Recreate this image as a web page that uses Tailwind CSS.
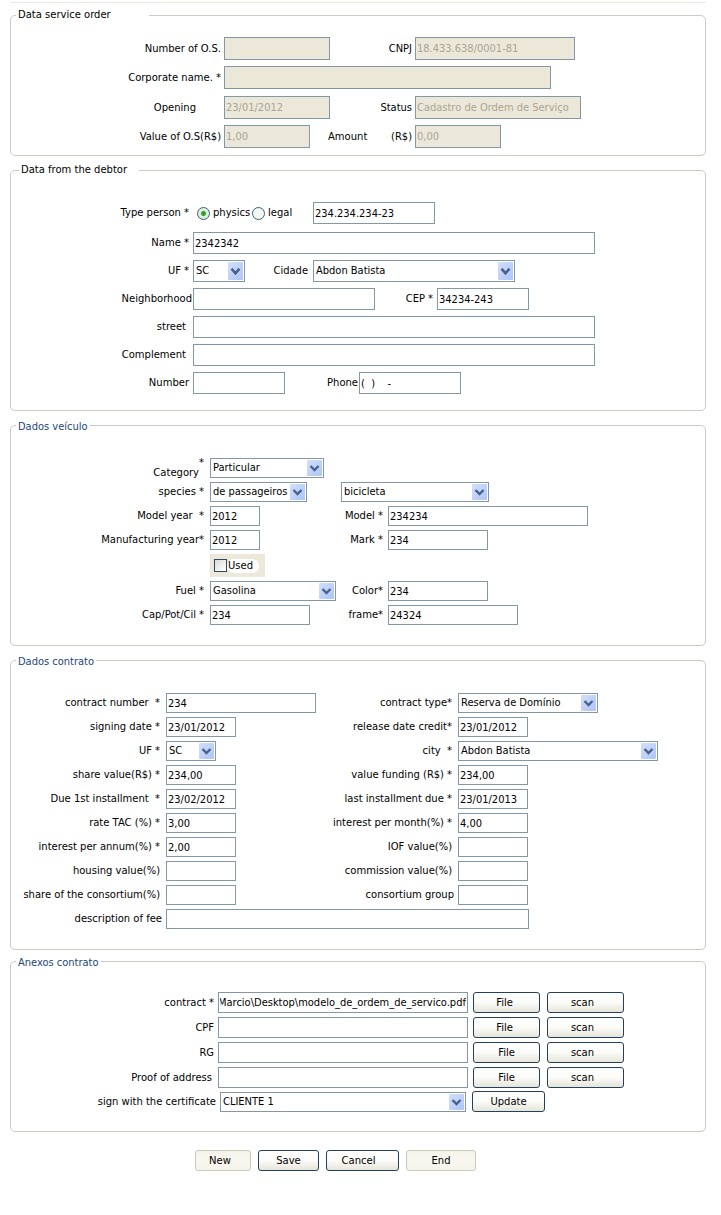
<!DOCTYPE html>
<html lang="en">
<head>
<meta charset="utf-8">
<meta name="viewport" content="width=device-width, initial-scale=1">
<title>Service order</title>
<script src="https://cdn.jsdelivr.net/npm/@tailwindcss/browser@4"></script>
</head>
<body class="bg-white text-black">
<svg class="absolute size-0" aria-hidden="true">
  <defs>
    <linearGradient id="g" x1="0" y1="0" x2="1" y2="1"><stop offset="0" stop-color="#d3e0fc"/><stop offset="1" stop-color="#adc4f5"/></linearGradient>
    <symbol id="arrow" viewBox="0 0 15 16" preserveAspectRatio="none"><rect width="15" height="16" rx="1" fill="url(#g)"/><path d="M3.5 6 7.5 10 11.5 6" fill="none" stroke="#46618f" stroke-width="2.4"/></symbol>
  </defs>
</svg>
<form class="pt-[2px] pl-[10px] pr-[15px] font-['DejaVu_Sans',sans-serif] text-[10px] leading-[14px]
  [&_fieldset]:rounded-[5px] [&_fieldset]:border [&_fieldset]:border-[#cbcbc2] [&_fieldset]:min-w-0
  [&_legend]:ml-[5px] [&_legend]:h-[14px] [&_legend]:pl-[2px]
  [&_label]:shrink-0 [&_label]:whitespace-pre
  [&_label_span]:font-['DejaVu_Sans_Condensed','DejaVu_Sans',sans-serif] [&_label_span]:text-[11px]
  [&_input[type=text]]:h-full [&_input[type=text]]:shrink-0 [&_input[type=text]]:border [&_input[type=text]]:border-[#8398a6] [&_input[type=text]]:px-px [&_input[type=text]]:font-['DejaVu_Sans_Condensed','DejaVu_Sans',sans-serif] [&_input[type=text]]:text-[11px] [&_input:disabled]:bg-[#ebe8d9] [&_input:disabled]:text-[#aaa594]
  [&_select]:h-full [&_select]:w-full [&_select]:appearance-none [&_select]:border [&_select]:border-[#8398a6] [&_select]:bg-white [&_select]:pl-[2px] [&_select]:font-['DejaVu_Sans_Condensed','DejaVu_Sans',sans-serif] [&_select]:text-[11px]
  [&_button]:h-[21px] [&_button]:shrink-0 [&_button]:rounded-[3px] [&_button]:border [&_button]:border-[#24405c] [&_button]:bg-linear-to-b [&_button]:from-white [&_button]:via-[#fbfbf8] [&_button]:to-[#e6e5da]
  [&_button:disabled]:border-[#cbc9ba] [&_button:disabled]:from-[#f5f4ea] [&_button:disabled]:via-[#f8f7f0] [&_button:disabled]:to-[#f5f4ea]">
  <hr class="mb-[5px] border-[#ebebe4]">

  <fieldset class="pt-[15px] pb-[7px]">
    <legend class="pr-[38px]">Data service order</legend>
    <div class="flex flex-col gap-[6px] [&>div]:flex [&>div]:h-[23px] [&>div]:items-center">
      <div><label for="os" class="w-[213px] pr-[3px] text-right">Number of O.S.</label><input id="os" type="text" disabled class="w-[106px]"><label for="cnpj" class="w-[85px] pr-[3px] text-right"><span>CNPJ</span></label><input id="cnpj" type="text" disabled value="18.433.638/0001-81" class="w-[160px]"></div>
      <div><label for="corp" class="w-[213px] pr-[3px] text-right">Corporate name. <span>*</span></label><input id="corp" type="text" disabled class="w-[327px]"></div>
      <div class="mt-[1px]"><label for="open" class="w-[213px] pr-[28px] text-right">Opening</label><input id="open" type="text" disabled value="23/01/2012" class="w-[106px]"><label for="status" class="w-[85px] pr-[3px] text-right"><span>Status</span></label><input id="status" type="text" disabled value="Cadastro de Ordem de Serviço" class="w-[166px]"></div>
      <div><label for="val" class="w-[213px] pr-[3px] text-right">Value of O.S<span>(R$)</span></label><input id="val" type="text" disabled value="1,00" class="w-[86px]"><label for="amt" class="flex w-[105px] items-center justify-between pr-[3px] pl-[18px]">Amount<span>(R$)</span></label><input id="amt" type="text" disabled value="0,00" class="w-[86px]"></div>
    </div>
  </fieldset>

  <fieldset class="mt-[7px] pt-[25px] pb-[16px]">
    <legend class="ml-[8px]! pr-[12px]">Data from the debtor</legend>
    <div class="flex flex-col gap-[6px] [&>div]:flex [&>div]:h-[22px] [&>div]:items-center">
      <div class="mb-[2px]"><label for="doc" class="w-[182px] pr-[4px] text-right">Type person <span>*</span></label>
        <div class="flex w-[120px] items-center pl-[4px]">
          <input id="phys" name="kind" type="radio" checked class="size-[13px] shrink-0 appearance-none rounded-full border border-[#3c5f7c] bg-[#f4f6f2] checked:bg-[radial-gradient(circle,#2fa32f_0_2px,#dff0df_3px)]"><label for="phys" class="w-[42px] pl-[3px]">physics</label>
          <input id="legal" name="kind" type="radio" class="size-[13px] shrink-0 appearance-none rounded-full border border-[#3c5f7c] bg-[#f4f6f2]"><label for="legal" class="pl-[3px]">legal</label>
        </div>
        <input id="doc" type="text" value="234.234.234-23" class="w-[122px]"></div>
      <div><label for="name" class="w-[182px] pr-[4px] text-right">Name <span>*</span></label><input id="name" type="text" value="2342342" class="w-[402px]"></div>
      <div><label for="uf1" class="w-[182px] pr-[4px] text-right"><span>UF *</span></label>
        <div class="relative h-full w-[52px]"><select id="uf1"><option>SC</option></select><svg class="pointer-events-none absolute top-[2px] right-[2px] h-[18px] w-[15px]"><use href="#arrow"/></svg></div>
        <label for="cid" class="w-[68px] pr-[5px] text-right"><span>Cidade</span></label>
        <div class="relative h-full w-[202px]"><select id="cid"><option>Abdon Batista</option></select><svg class="pointer-events-none absolute top-[2px] right-[2px] h-[18px] w-[15px]"><use href="#arrow"/></svg></div></div>
      <div><label for="nb" class="w-[182px] pr-[1px] text-right">Neighborhood</label><input id="nb" type="text" class="w-[182px]"><label for="cep" class="w-[62px] pr-[4px] text-right"><span>CEP *</span></label><input id="cep" type="text" value="34234-243" class="w-[92px]"></div>
      <div><label for="st" class="w-[182px] pr-[7px] text-right">street</label><input id="st" type="text" class="w-[402px]"></div>
      <div><label for="cmp" class="w-[182px] pr-[7px] text-right">Complement</label><input id="cmp" type="text" class="w-[402px]"></div>
      <div><label for="num" class="w-[182px] pr-[4px] text-right">Number</label><input id="num" type="text" class="w-[92px]"><label for="ph" class="w-[74px] pr-[1px] text-right">Phone</label><input id="ph" type="text" value="(  )    -" class="w-[102px]"></div>
    </div>
  </fieldset>

  <fieldset class="mt-[7px] pt-[26px] pb-[20px]">
    <legend class="pr-[2px] font-['DejaVu_Sans_Condensed','DejaVu_Sans',sans-serif] text-[11px] leading-[18px] text-[#1d4777]">Dados veículo</legend>
    <div class="flex flex-col gap-[4px] [&>div]:flex [&>div]:h-[20px] [&>div]:items-center">
      <div><label for="cat" class="flex w-[199px] items-start justify-end pr-[6px]"><span class="pt-[10px] font-['DejaVu_Sans',sans-serif]! text-[10px]!">Category</span><span>*</span></label>
        <div class="relative h-full w-[114px]"><select id="cat"><option>Particular</option></select><svg class="pointer-events-none absolute top-[2px] right-[2px] h-[16px] w-[15px]"><use href="#arrow"/></svg></div></div>
      <div><label for="sp" class="w-[199px] pr-[6px] text-right">species <span>*</span></label>
        <div class="relative h-full w-[97px]"><select id="sp"><option>de passageiros</option></select><svg class="pointer-events-none absolute top-[2px] right-[2px] h-[16px] w-[15px]"><use href="#arrow"/></svg></div>
        <div class="relative ml-[34px] h-full w-[148px]"><select id="sp2" aria-label="Vehicle kind"><option>bicicleta</option></select><svg class="pointer-events-none absolute top-[2px] right-[2px] h-[16px] w-[15px]"><use href="#arrow"/></svg></div></div>
      <div><label for="my" class="w-[199px] pr-[6px] text-right">Model year  <span>*</span></label><input id="my" type="text" value="2012" class="w-[50px]"><label for="md" class="w-[128px] pr-[5px] text-right">Model<span> *</span></label><input id="md" type="text" value="234234" class="w-[200px]"></div>
      <div><label for="fy" class="w-[199px] pr-[6px] text-right">Manufacturing year<span>*</span></label><input id="fy" type="text" value="2012" class="w-[50px]"><label for="mk" class="w-[128px] pr-[5px] text-right">Mark<span> *</span></label><input id="mk" type="text" value="234" class="w-[100px]"></div>
      <div class="h-[23px]!"><div class="ml-[199px] flex h-full w-[55px] items-center bg-[#ece9da] pl-[4px]"><input id="used" type="checkbox" class="size-[13px] shrink-0 appearance-none border border-[#2c4a66] bg-linear-to-br from-[#dcdcd5] to-white"><label for="used" class="rounded-[7px] bg-white pr-[6px] pl-px">Used</label></div></div>
      <div><label for="fu" class="w-[199px] pr-[6px] text-right">Fuel <span>*</span></label>
        <div class="relative h-full w-[126px]"><select id="fu"><option>Gasolina</option></select><svg class="pointer-events-none absolute top-[2px] right-[2px] h-[16px] w-[15px]"><use href="#arrow"/></svg></div>
        <label for="co" class="w-[52px] pr-[5px] text-right">Color<span>*</span></label><input id="co" type="text" value="234" class="w-[100px]"></div>
      <div><label for="cpc" class="w-[199px] pr-[6px] text-right"><span>Cap/Pot/Cil *</span></label><input id="cpc" type="text" value="234" class="w-[100px]"><label for="fr" class="w-[78px] pr-[5px] text-right">frame<span>*</span></label><input id="fr" type="text" value="24324" class="w-[130px]"></div>
    </div>
  </fieldset>

  <fieldset class="mt-[7px] pt-[26px] pb-[20px]">
    <legend class="pr-[2px] font-['DejaVu_Sans_Condensed','DejaVu_Sans',sans-serif] text-[11px] leading-[18px] text-[#1d4777]">Dados contrato</legend>
    <div class="flex flex-col gap-[4px] [&>div]:flex [&>div]:h-[20px] [&>div]:items-center">
      <div><label for="cn" class="w-[155px] pr-[6px] text-right">contract number  <span>*</span></label><input id="cn" type="text" value="234" class="w-[150px]"><label for="ct" class="w-[142px] pr-[6px] text-right">contract type<span>*</span></label>
        <div class="relative h-full w-[140px]"><select id="ct"><option>Reserva de Domínio</option></select><svg class="pointer-events-none absolute top-[2px] right-[2px] h-[16px] w-[15px]"><use href="#arrow"/></svg></div></div>
      <div><label for="sd" class="w-[155px] pr-[6px] text-right">signing date <span>*</span></label><input id="sd" type="text" value="23/01/2012" class="w-[70px]"><label for="rd" class="w-[222px] pr-[6px] text-right">release date credit<span>*</span></label><input id="rd" type="text" value="23/01/2012" class="w-[70px]"></div>
      <div><label for="uf2" class="w-[155px] pr-[6px] text-right"><span>UF *</span></label>
        <div class="relative h-full w-[50px]"><select id="uf2"><option>SC</option></select><svg class="pointer-events-none absolute top-[2px] right-[2px] h-[16px] w-[15px]"><use href="#arrow"/></svg></div>
        <label for="ci" class="w-[242px] pr-[6px] text-right">city <span> *</span></label>
        <div class="relative h-full w-[200px]"><select id="ci"><option>Abdon Batista</option></select><svg class="pointer-events-none absolute top-[2px] right-[2px] h-[16px] w-[15px]"><use href="#arrow"/></svg></div></div>
      <div><label for="sv" class="w-[155px] pr-[6px] text-right">share value<span>(R$) *</span></label><input id="sv" type="text" value="234,00" class="w-[70px]"><label for="vf" class="w-[222px] pr-[6px] text-right">value funding <span>(R$) *</span></label><input id="vf" type="text" value="234,00" class="w-[70px]"></div>
      <div><label for="di" class="w-[155px] pr-[6px] text-right">Due 1st installment  <span>*</span></label><input id="di" type="text" value="23/02/2012" class="w-[70px]"><label for="li" class="w-[222px] pr-[6px] text-right">last installment due <span>*</span></label><input id="li" type="text" value="23/01/2013" class="w-[70px]"></div>
      <div><label for="rt" class="w-[155px] pr-[6px] text-right">rate TAC <span>(%) *</span></label><input id="rt" type="text" value="3,00" class="w-[70px]"><label for="im" class="w-[222px] pr-[6px] text-right">interest per month<span>(%) *</span></label><input id="im" type="text" value="4,00" class="w-[70px]"></div>
      <div><label for="ia" class="w-[155px] pr-[6px] text-right">interest per annum<span>(%) *</span></label><input id="ia" type="text" value="2,00" class="w-[70px]"><label for="iof" class="w-[222px] pr-[6px] text-right">IOF value<span>(%)</span></label><input id="iof" type="text" class="w-[70px]"></div>
      <div><label for="hv" class="w-[155px] pr-[6px] text-right">housing value<span>(%)</span></label><input id="hv" type="text" class="w-[70px]"><label for="cv" class="w-[222px] pr-[6px] text-right">commission value<span>(%)</span></label><input id="cv" type="text" class="w-[70px]"></div>
      <div><label for="sc" class="w-[155px] pr-[6px] text-right">share of the consortium<span>(%)</span></label><input id="sc" type="text" class="w-[70px]"><label for="cg" class="w-[222px] pr-[4px] text-right">consortium group</label><input id="cg" type="text" class="w-[70px]"></div>
      <div><label for="df" class="w-[155px] pr-[4px] text-right">description of fee</label><input id="df" type="text" class="w-[363px]"></div>
    </div>
  </fieldset>

  <fieldset class="mt-[4px] pt-[24px] pb-[19px]">
    <legend class="pr-[2px] font-['DejaVu_Sans_Condensed','DejaVu_Sans',sans-serif] text-[11px] leading-[18px] text-[#1d4777]">Anexos contrato</legend>
    <div class="flex flex-col gap-[4px] [&>div]:flex [&>div]:h-[21px] [&>div]:items-center [&_button]:mr-[7px]">
      <div><label for="f1" class="w-[207px] pr-[4px] text-right">contract <span>*</span></label><input id="f1" type="text" value="Marcio\Desktop\modelo_de_ordem_de_servico.pdf" class="mr-[5px] w-[250px]"><button type="button" class="w-[67px] pr-[4px]">File</button><button type="button" class="w-[77px] pr-[6px]">scan</button></div>
      <div><label for="f2" class="w-[207px] pr-[4px] text-right"><span>CPF</span></label><input id="f2" type="text" class="mr-[5px] w-[250px]"><button type="button" class="w-[67px] pr-[4px]">File</button><button type="button" class="w-[77px] pr-[6px]">scan</button></div>
      <div><label for="f3" class="w-[207px] pr-[4px] text-right"><span>RG</span></label><input id="f3" type="text" class="mr-[5px] w-[250px]"><button type="button" class="w-[67px]">File</button><button type="button" class="w-[77px] pr-[6px]">scan</button></div>
      <div><label for="f4" class="w-[207px] pr-[6px] text-right">Proof of address</label><input id="f4" type="text" class="mr-[5px] w-[250px]"><button type="button" class="w-[67px]">File</button><button type="button" class="w-[77px] pr-[6px]">scan</button></div>
      <div class="-mt-px"><label for="cert" class="w-[209px] pr-[4px] text-right">sign with the certificate</label>
        <div class="relative mr-[6px] h-[20px] w-[246px]"><select id="cert"><option>CLIENTE 1</option></select><svg class="pointer-events-none absolute top-[2px] right-[2px] h-[16px] w-[15px]"><use href="#arrow"/></svg></div>
        <button type="button" class="w-[73px]">Update</button></div>
    </div>
  </fieldset>

  <div class="mt-[18px] flex gap-[7px] pl-[185px]">
    <button type="button" disabled class="w-[56px] pr-[6px]">New</button>
    <button type="button" class="w-[61px]">Save</button>
    <button type="button" class="w-[73px] pr-[8px]">Cancel</button>
    <button type="button" disabled class="w-[70px]">End</button>
  </div>
</form>
<script>
  // Show the end of the file path, where the file name is.
  const path = document.getElementById('f1');
  path.scrollLeft = path.scrollWidth;
</script>
</body>
</html>
